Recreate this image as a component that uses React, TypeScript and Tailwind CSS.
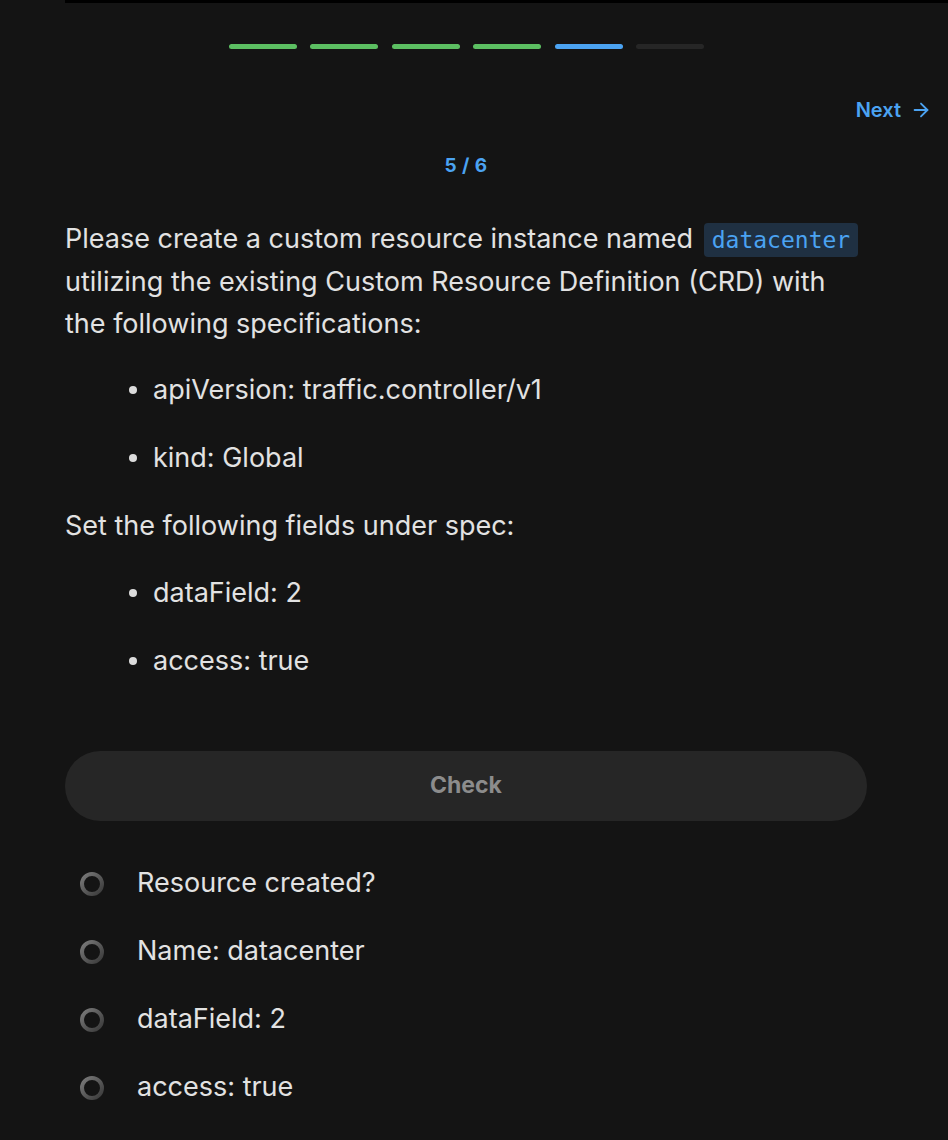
import { ArrowRight } from "lucide-react";

const BARS = ["bg-[#5cbf62]", "bg-[#5cbf62]", "bg-[#5cbf62]", "bg-[#5cbf62]", "bg-[#4ba3f2]", "bg-[#262626]"];

const CHECKS = ["Resource created?", "Name: datacenter", "dataField: 2", "access: true"];

function Ring() {
  return (
    <svg width="28" height="28" viewBox="0 0 28 28">
      <defs>
        <linearGradient id="ringGrad" x1="0" y1="0" x2="1" y2="1">
          <stop offset="0%" stopColor="#7a7a7a" />
          <stop offset="100%" stopColor="#3a3a3a" />
        </linearGradient>
      </defs>
      <circle cx="14" cy="14" r="10" fill="none" stroke="url(#ringGrad)" strokeWidth="4" />
    </svg>
  );
}

function Bullet({ children }: { children: React.ReactNode }) {
  return (
    <li className="flex items-center gap-[16px] h-[68px]">
      <span className="w-[8px] h-[8px] rounded-full bg-[#dcdcdc]" />
      <span>{children}</span>
    </li>
  );
}

export default function App() {
  return (
    <div className="min-h-[1140px] w-[948px] bg-[#141414] text-[#e2e2e2] font-['Inter',sans-serif] overflow-hidden">
      <div className="ml-[65px] h-[3px] bg-black" />
      <div className="w-[868px] pl-[65px]">
        <div className="flex justify-center gap-[13.6px] pt-[41px]">
          {BARS.map((c, i) => (
            <div key={i} className={`w-[68px] h-[5px] rounded-full ${c}`} />
          ))}
        </div>
      </div>
      <div className="flex justify-end pr-[16px] pt-[46px]">
        <button className="flex items-center gap-[9px] text-[#4ba3f2] text-[20px] font-semibold">
          Next
          <ArrowRight size={22} strokeWidth={2} />
        </button>
      </div>
      <div className="w-[802px] ml-[65px]">
        <p className="text-center text-[#4ba3f2] text-[19px] font-bold pt-[27px] tracking-wide">5 / 6</p>
        <div className="text-[27px] leading-[42px] mt-[37px]">
          <p>
            Please create a custom resource instance named{" "}
            <code className="font-['DejaVu_Sans_Mono',monospace] text-[23px] text-[#4ba3f2] bg-[#1f3042] rounded-[4px] px-[8px] py-[4px] ml-[3px]">
              datacenter
            </code>{" "}
            utilizing the existing Custom Resource Definition (CRD) with the following specifications:
          </p>
          <ul className="pl-[64px] mt-[11px]">
            <Bullet>apiVersion: traffic.controller/v1</Bullet>
            <Bullet>kind: Global</Bullet>
          </ul>
          <p className="mt-[13px]">Set the following fields under spec:</p>
          <ul className="pl-[64px] mt-[12px]">
            <Bullet>dataField: 2</Bullet>
            <Bullet>access: true</Bullet>
          </ul>
        </div>
        <button className="mt-[56px] w-full h-[70px] rounded-full bg-[#262626] text-[#8c8c8c] text-[23px] font-bold">
          Check
        </button>
        <ul className="mt-[29px] text-[27px]">
          {CHECKS.map((t) => (
            <li key={t} className="flex items-center h-[68px] pl-[13px] gap-[31px]">
              <Ring />
              <span>{t}</span>
            </li>
          ))}
        </ul>
      </div>
    </div>
  );
}
